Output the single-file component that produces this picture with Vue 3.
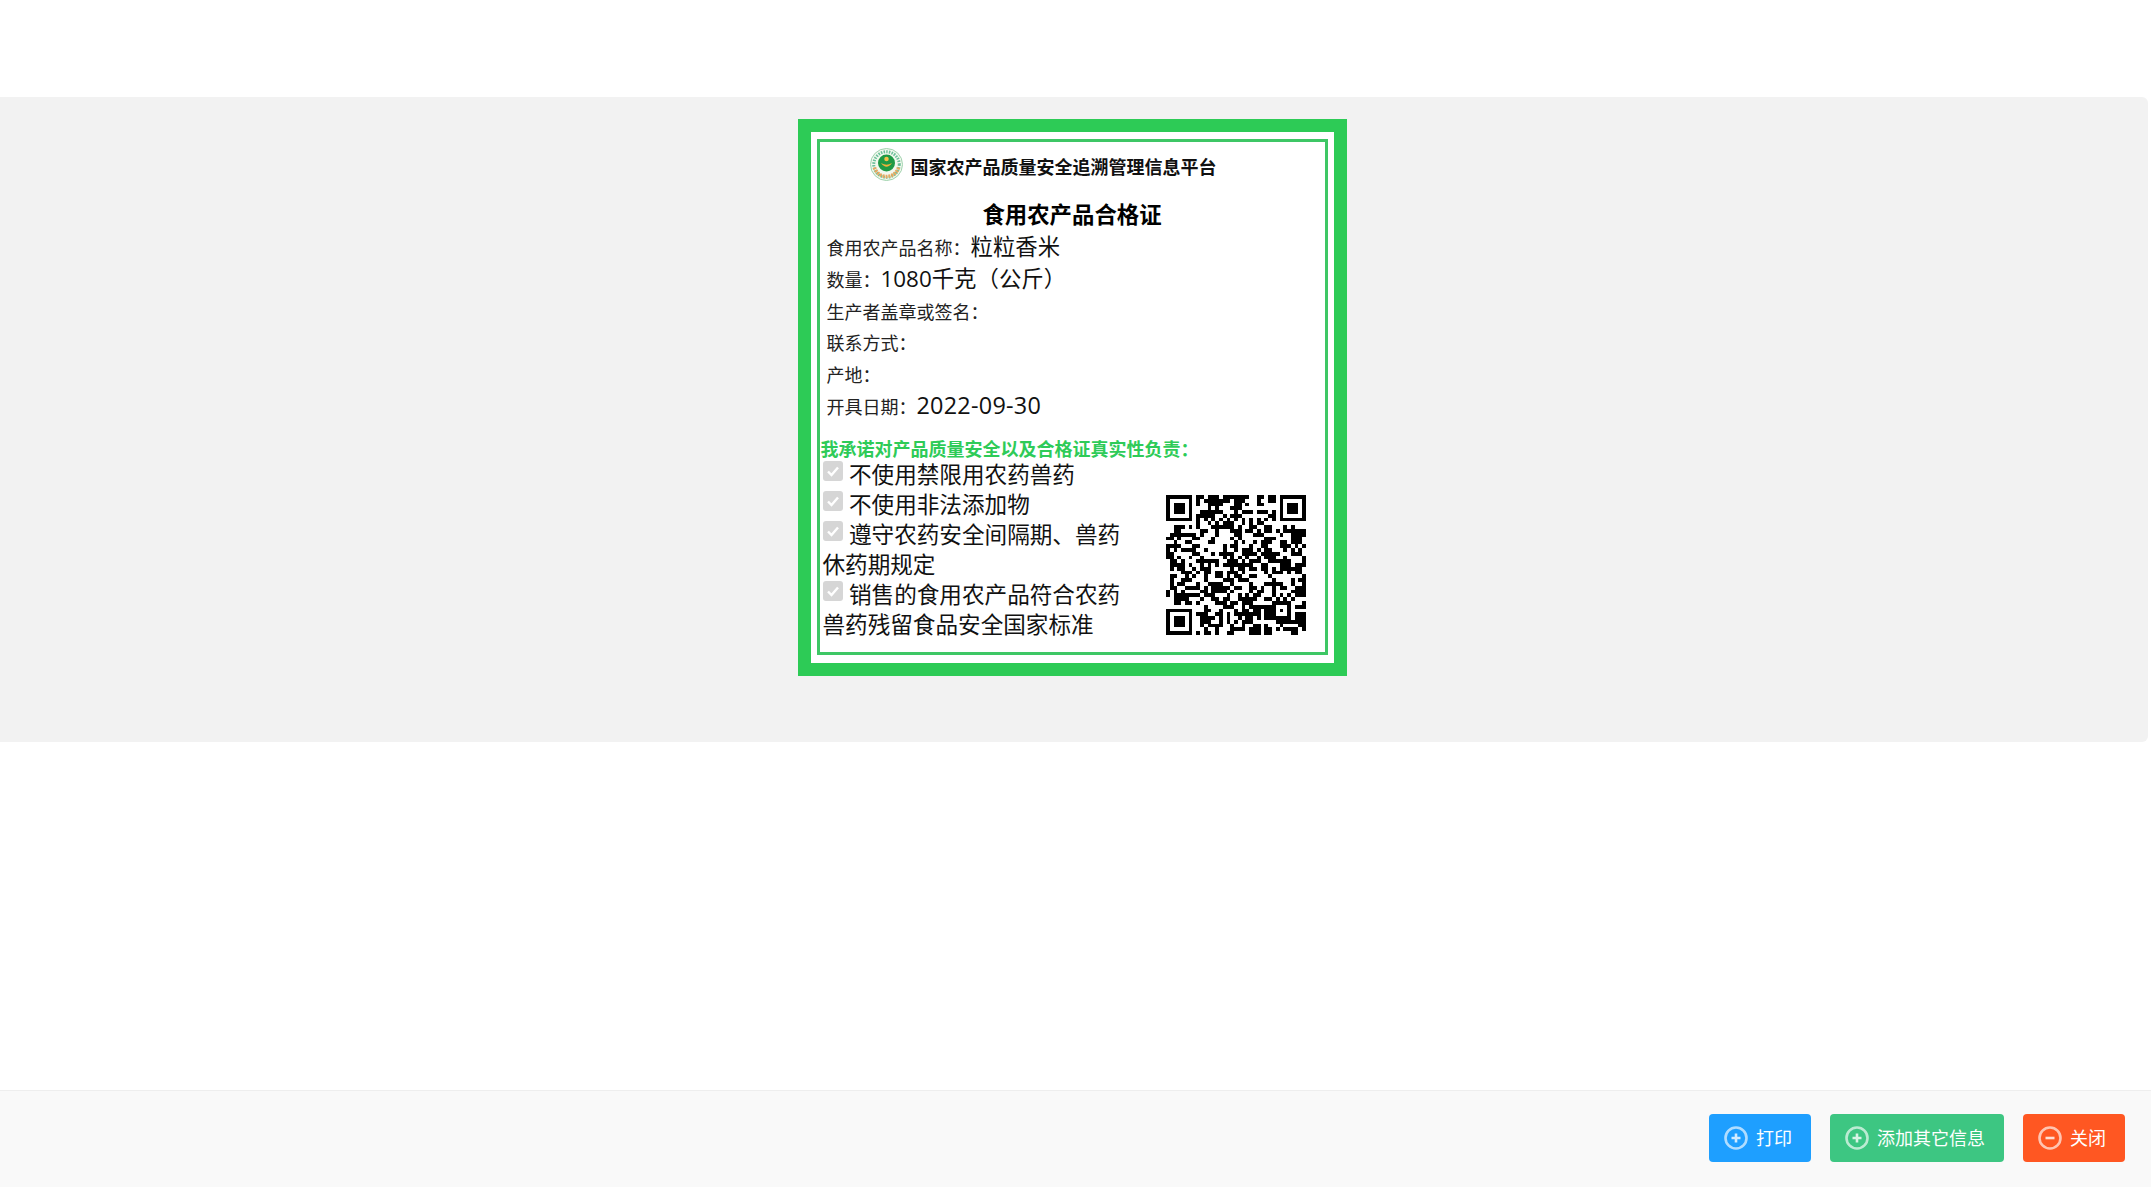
<template>
  <div class="page">
    <div class="band">
      <div class="cert">
        <div class="cert-inner">
          <div class="platform">
            <svg class="logo" viewBox="0 0 66 66">
              <circle cx="33" cy="33" r="32" fill="#f2f8ee" stroke="#9fd2ad" stroke-width="2" />
              <circle cx="33" cy="33" r="25.5" fill="none" stroke="#6cc09a" stroke-width="6" stroke-dasharray="3 2.4" />
              <path d="M9 39 A25 25 0 0 0 57 39" fill="none" stroke="#e8a860" stroke-width="7" stroke-dasharray="4 2" />
              <circle cx="33" cy="30" r="17" fill="#1f9a45" />
              <circle cx="33" cy="22" r="4.5" fill="#f3c04a" />
              <path d="M22 30 Q33 45 44 30 Q33 37 22 30 Z" fill="#f0b23c" />
            </svg>
            <span class="platform-name">国家农产品质量安全追溯管理信息平台</span>
          </div>
          <h1 class="title">食用农产品合格证</h1>
          <div v-for="row in rows" :key="row.label" class="row">
            <span class="label">{{ row.label }}：</span><span class="value" :class="{ date: row.isDate }">{{ row.value }}</span>
          </div>
          <div class="promise">我承诺对产品质量安全以及合格证真实性负责：</div>
          <div class="bottom">
            <div class="checks">
              <div v-for="item in checks" :key="item" class="check-line">
                <span class="box">
                  <svg viewBox="0 0 20 20"><path d="M5 10.5l3.5 3.5L15 6.5" fill="none" stroke="#fff" stroke-width="2.4" /></svg>
                </span>{{ item }}
              </div>
            </div>
            <svg class="qr" :viewBox="`0 0 ${qrSize} ${qrSize}`" shape-rendering="crispEdges">
              <rect v-for="m in qrModules" :key="m.k" :x="m.x" :y="m.y" width="1" height="1" fill="#000" />
            </svg>
          </div>
        </div>
      </div>
    </div>
    <div class="footer">
      <button class="btn blue">
        <svg class="ico" viewBox="0 0 24 24"><circle cx="12" cy="12" r="10.5" /><path class="mark" d="M12 7.5v9M7.5 12h9" /></svg><span class="txt">打印</span>
      </button>
      <button class="btn green">
        <svg class="ico" viewBox="0 0 24 24"><circle cx="12" cy="12" r="10.5" /><path class="mark" d="M12 7.5v9M7.5 12h9" /></svg><span class="txt">添加其它信息</span>
      </button>
      <button class="btn orange">
        <svg class="ico" viewBox="0 0 24 24"><circle cx="12" cy="12" r="10.5" /><path class="mark" d="M7.5 12h9" /></svg><span class="txt">关闭</span>
      </button>
    </div>
  </div>
</template>

<script setup>
const rows = [
  { label: '食用农产品名称', value: '粒粒香米' },
  { label: '数量', value: '1080千克（公斤）' },
  { label: '生产者盖章或签名', value: '' },
  { label: '联系方式', value: '' },
  { label: '产地', value: '' },
  { label: '开具日期', value: '2022-09-30', isDate: true }
]

const checks = [
  '不使用禁限用农药兽药',
  '不使用非法添加物',
  '遵守农药安全间隔期、兽药休药期规定',
  '销售的食用农产品符合农药兽药残留食品安全国家标准'
]

// the code itself is a placeholder: finder and timing patterns are real, the data is seeded noise
const qrSize = 37

function inFinder(x, y, ox, oy) {
  return x >= ox && x < ox + 8 && y >= oy && y < oy + 8
}

function finderOn(x, y, ox, oy) {
  const dx = x - ox
  const dy = y - oy
  if (dx === 7 || dy === 7 || dx === -1 || dy === -1) return false
  const edge = dx === 0 || dx === 6 || dy === 0 || dy === 6
  const core = dx >= 2 && dx <= 4 && dy >= 2 && dy <= 4
  return edge || core
}

function buildQr() {
  const list = []
  let seed = 20220930
  for (let y = 0; y < qrSize; y++) {
    for (let x = 0; x < qrSize; x++) {
      seed = (seed * 1103515245 + 12345) & 0x7fffffff
      let on = ((seed >> 16) & 7) < 4
      if (inFinder(x, y, 0, 0)) on = finderOn(x, y, 0, 0)
      else if (inFinder(x, y, qrSize - 8, 0)) on = finderOn(x, y, qrSize - 7, 0)
      else if (inFinder(x, y, 0, qrSize - 8)) on = finderOn(x, y, 0, qrSize - 7)
      else if (x === 6 || y === 6) on = (x + y) % 2 === 0
      else if (x >= 28 && x <= 32 && y >= 28 && y <= 32) {
        on = x === 28 || x === 32 || y === 28 || y === 32 || (x === 30 && y === 30)
      }
      if (on) list.push({ k: x + '-' + y, x, y })
    }
  }
  return list
}

const qrModules = buildQr()
</script>

<style scoped>
.page {
  min-height: 100vh;
  display: flex;
  flex-direction: column;
  font-family: "Noto Sans CJK SC", "Liberation Sans", sans-serif;
  background: #fff;
}

.band {
  margin-top: 97px;
  margin-right: 3px;
  height: 645px;
  box-sizing: border-box;
  padding: 22px 4px 0 0;
  background: #f2f2f2;
  border-radius: 0 6px 6px 0;
  display: flex;
  justify-content: center;
  align-items: flex-start;
}

.cert {
  width: 549px;
  height: 557px;
  box-sizing: border-box;
  border: 13px solid #2dcb56;
  background: #fff;
  padding: 7px 6px 8px;
}

.cert-inner {
  height: 100%;
  box-sizing: border-box;
  border: 3px solid #3ec765;
  color: #000;
}

.platform {
  display: flex;
  align-items: center;
  height: 35px;
  margin-top: 5px;
  padding-left: 50px;
  font-size: 18px;
  font-weight: 700;
  color: #111;
}

.platform-name {
  margin-top: 3px;
}

.logo {
  width: 33px;
  height: 33px;
  margin-right: 8px;
  flex: none;
}

.title {
  margin: 13px 0 0;
  text-align: center;
  font-size: 22.4px;
  line-height: 36px;
  font-weight: 700;
}

.row {
  height: 31.8px;
  line-height: 31.8px;
  padding-left: 7px;
  white-space: nowrap;
}

.label {
  font-size: 18px;
  color: #222;
}

.value {
  font-family: "Open Sans", "Noto Sans CJK SC", sans-serif;
  font-size: 22.4px;
  color: #111;
}

.date {
  font-size: 23.4px;
  letter-spacing: 0.25px;
}

.promise {
  margin-top: 15.8px;
  padding-left: 1px;
  font-size: 18px;
  line-height: 21px;
  font-weight: 700;
  color: #2ecb58;
}

.bottom {
  display: flex;
  align-items: flex-start;
  justify-content: space-between;
  padding: 0 18.5px 0 3px;
}

.checks {
  width: 310px;
  font-size: 22.6px;
  line-height: 30px;
  color: #111;
}

.box {
  display: inline-block;
  width: 20px;
  height: 20px;
  margin-right: 6.5px;
  vertical-align: 1.6px;
  border-radius: 3px;
  background: #d6d6d6;
}

.box svg {
  display: block;
}

.qr {
  width: 140px;
  height: 140px;
  margin-top: 36.5px;
  flex: none;
  filter: blur(0.7px);
}

.footer {
  margin-top: auto;
  height: 97px;
  box-sizing: border-box;
  border-top: 1px solid #eee;
  background: #f9f9f9;
  padding: 23px 26px 0 0;
  display: flex;
  justify-content: flex-end;
  gap: 19px;
}

.btn {
  height: 48px;
  border: none;
  border-radius: 4px;
  padding: 0 19px 0 15px;
  display: flex;
  align-items: center;
  color: #fff;
  font-family: inherit;
  font-size: 18px;
  cursor: pointer;
}

.txt {
  margin-bottom: 2px;
}

.blue { background: #1e9fff; }
.green { background: #3dc682; }
.orange { background: #ff5722; }

.ico {
  width: 24px;
  height: 24px;
  margin-right: 8px;
  fill: none;
  stroke: rgba(255, 255, 255, 0.65);
  stroke-width: 2.6;
}

.mark {
  stroke-width: 2.6;
  stroke: rgba(255, 255, 255, 0.8);
}
</style>
